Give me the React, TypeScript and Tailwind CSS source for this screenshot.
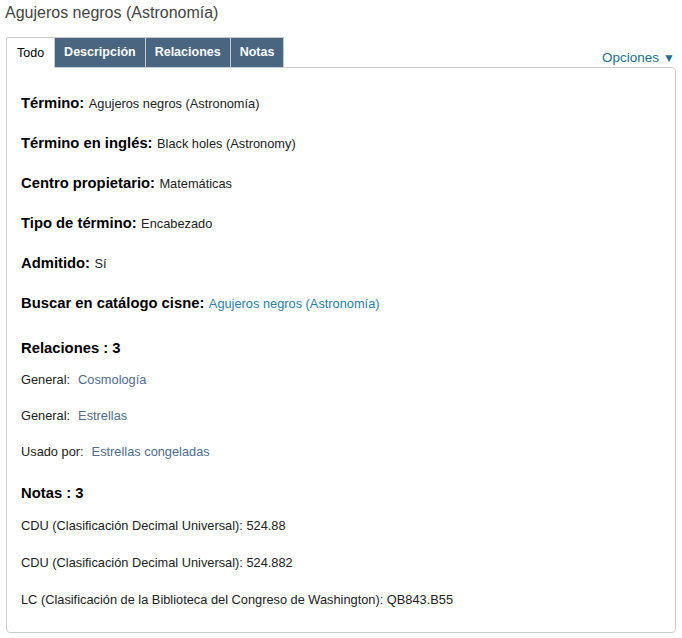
import { useState } from "react";

const fields = [
  { label: "Término:", value: "Agujeros negros (Astronomía)" },
  { label: "Término en inglés:", value: "Black holes (Astronomy)" },
  { label: "Centro propietario:", value: "Matemáticas" },
  { label: "Tipo de término:", value: "Encabezado" },
  { label: "Admitido:", value: "Sí" },
];

const relations = [
  { type: "General:", term: "Cosmología" },
  { type: "General:", term: "Estrellas" },
  { type: "Usado por:", term: "Estrellas congeladas" },
];

const notes = [
  "CDU (Clasificación Decimal Universal): 524.88",
  "CDU (Clasificación Decimal Universal): 524.882",
  "LC (Clasificación de la Biblioteca del Congreso de Washington): QB843.B55",
];

const tabs = ["Todo", "Descripción", "Relaciones", "Notas"];

export default function App() {
  const [active, setActive] = useState("Todo");

  return (
    <div className="bg-white w-[682px] h-[638px] px-[6px] pt-[2px] text-[#222]" style={{ fontFamily: '"Liberation Sans", Arial, sans-serif' }}>
      <h1 className="text-[16px] text-[#444] leading-[21px] -ml-[1px]">Agujeros negros (Astronomía)</h1>

      <div className="flex items-end justify-between mt-[14px]">
        <div className="flex">
          {tabs.map(tab => (
            <button
              key={tab}
              onClick={() => setActive(tab)}
              className={
                tab === active
                  ? "h-[31px] px-[10px] text-[12.5px] bg-white text-black border border-[#ccc] border-b-0 rounded-t-[2px] -mb-px relative z-10"
                  : "h-[30px] px-[9px] text-[12.5px] bg-[#4a6580] text-white font-semibold border border-[#c8c8c8] border-b-0 -ml-px"
              }
            >
              {tab}
            </button>
          ))}
        </div>
        <button className="text-[13.5px] text-[#1d6f8c] -mb-[1px] mr-[1px] flex items-center gap-[4px]">
          Opciones <span className="text-[12px]">▼</span>
        </button>
      </div>

      <div className="border border-[#ccc] rounded-b-[4px] rounded-tr-[4px] h-[566px] pl-[14px] pt-[25px]">
        <div className="flex flex-col gap-[20px]">
          {fields.map(f => (
            <p key={f.label} className="leading-[19px]">
              <span className="font-bold text-[14.8px] text-black">{f.label}</span>{" "}
              <span className="text-[12.8px]">{f.value}</span>
            </p>
          ))}
          <p className="leading-[19px]">
            <span className="font-bold text-[14.8px] text-black">Buscar en catálogo cisne:</span>{" "}
            <a href="#" className="text-[12.8px] text-[#2b7fa5]">Agujeros negros (Astronomía)</a>
          </p>
        </div>

        <h2 className="font-bold text-[14.8px] text-black mt-[26px] leading-[19px]">Relaciones : 3</h2>
        <div className="flex flex-col gap-[19px] mt-[13px]">
          {relations.map(r => (
            <p key={r.term} className="text-[12.8px] leading-[17px]">
              {r.type}
              <a href="#" className="ml-[8px] text-[#4f6d8f]">{r.term}</a>
            </p>
          ))}
        </div>

        <h2 className="font-bold text-[14.8px] text-black mt-[24px] leading-[19px]">Notas : 3</h2>
        <div className="flex flex-col gap-[20px] mt-[14px]">
          {notes.map(n => (
            <p key={n} className="text-[12.8px] leading-[17px]">{n}</p>
          ))}
        </div>
      </div>
    </div>
  );
}
